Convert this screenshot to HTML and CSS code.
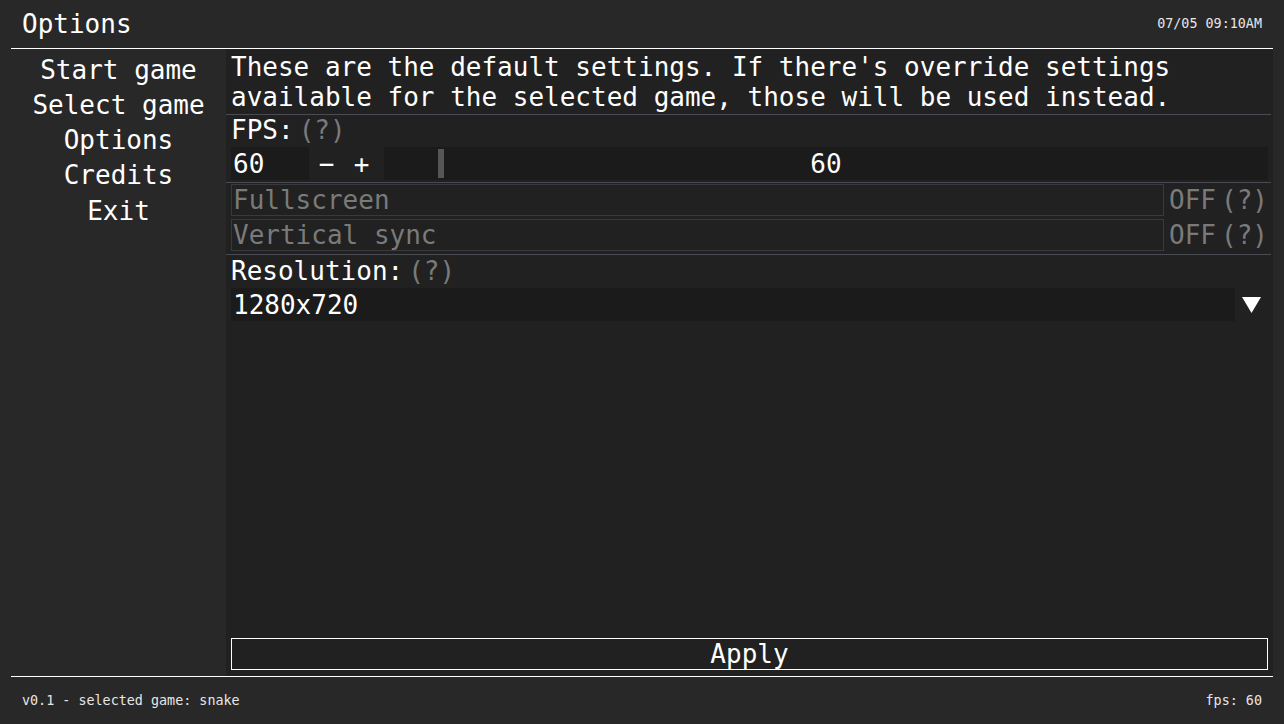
FILE: index.html
```html
<!DOCTYPE html>
<html lang="en">
<head>
<meta charset="utf-8">
<title>Options</title>
<link rel="stylesheet" href="styles.css">
</head>
<body>
<div class="app">
  <header class="topbar">
    <span class="title">Options</span>
    <span class="clock">07/05 09:10AM</span>
  </header>
  <div class="content">
    <nav class="sidebar">
      <div class="menu-item">Start game</div>
      <div class="menu-item">Select game</div>
      <div class="menu-item">Options</div>
      <div class="menu-item">Credits</div>
      <div class="menu-item">Exit</div>
    </nav>
    <main class="panel">
      <p class="intro">These are the default settings. If there's override settings<br>available for the selected game, those will be used instead.</p>
      <div class="sep"></div>
      <div class="label">FPS:<span class="help">(?)</span></div>
      <div class="fps-row">
        <div class="fps-input">60</div>
        <div class="step">&#8722;</div>
        <div class="step">+</div>
        <div class="slider">
          <div class="grab"></div>
          <span class="slider-value">60</span>
        </div>
      </div>
      <div class="sep sep-fps"></div>
      <div class="toggle-row">
        <div class="toggle-box">Fullscreen</div>
        <span class="toggle-state">OFF</span><span class="help">(?)</span>
      </div>
      <div class="toggle-row toggle-row-2">
        <div class="toggle-box">Vertical sync</div>
        <span class="toggle-state">OFF</span><span class="help">(?)</span>
      </div>
      <div class="sep sep-toggles"></div>
      <div class="label label-res">Resolution:<span class="help">(?)</span></div>
      <div class="combo">
        <div class="combo-value">1280x720</div>
        <div class="combo-arrow">
          <svg width="19" height="16" viewBox="0 0 19 16"><polygon points="0,0 19,0 9.5,16" fill="#ffffff"/></svg>
        </div>
      </div>
      <button class="apply">Apply</button>
    </main>
  </div>
  <footer class="bottombar">
    <span>v0.1 - selected game: snake</span>
    <span>fps: 60</span>
  </footer>
</div>
</body>
</html>
```

FILE: styles.css
```css
* {
  box-sizing: border-box;
}

html, body {
  margin: 0;
  padding: 0;
  background: #282828;
}

body {
  font-family: "DejaVu Sans Mono", "Liberation Mono", monospace;
  color: #ffffff;
}

.app {
  width: 1284px;
  height: 724px;
  padding: 0 11px;
  display: flex;
  flex-direction: column;
}

.topbar {
  height: 49px;
  border-bottom: 1px solid #ffffff;
  display: flex;
  align-items: center;
  justify-content: space-between;
  padding: 0 11px 1px 11px;
}

.title {
  font-size: 26px;
  line-height: 30px;
}

.clock {
  font-size: 13.4px;
  color: #e6e6e6;
}

.content {
  height: 627px;
  display: flex;
}

.sidebar {
  width: 215px;
  padding-top: 3.5px;
  display: flex;
  flex-direction: column;
  align-items: center;
}

.menu-item {
  font-size: 26px;
  line-height: 35.25px;
  white-space: pre;
}

.panel {
  flex: 1;
  background: #212121;
  padding: 3px 5px 6px 5px;
  display: flex;
  flex-direction: column;
  font-size: 26px;
  line-height: 30px;
}

.intro {
  margin: 0;
  white-space: nowrap;
}

.sep {
  height: 1px;
  background: #4a4a52;
  margin: 2px -3px 0 -5px;
}

.sep-toggles {
  margin-top: 3px;
}

.label {
  display: flex;
  white-space: pre;
}

.label-res {
  margin-top: 1px;
}

.help {
  color: #7a7a7a;
  margin-left: 5px;
}

.fps-row {
  margin-top: 2px;
  height: 33px;
  display: flex;
  align-items: stretch;
}

.fps-input {
  width: 78px;
  background: #1b1b1b;
  padding-left: 2px;
  display: flex;
  align-items: center;
}

.step {
  width: 35px;
  display: flex;
  align-items: center;
  justify-content: center;
}

.slider {
  flex: 1;
  margin-left: 5px;
  background: #1b1b1b;
  position: relative;
  display: flex;
  align-items: center;
  justify-content: center;
}

.grab {
  position: absolute;
  left: 54px;
  top: 2px;
  width: 6px;
  height: 29px;
  background: #565656;
}

.toggle-row {
  margin-top: 1px;
  height: 32px;
  display: flex;
  align-items: center;
  color: #7a7a7a;
}

.toggle-row-2 {
  margin-top: 3px;
}

.toggle-box {
  flex: 1;
  height: 32px;
  border: 1px solid #3a3a3a;
  padding-left: 1px;
  display: flex;
  align-items: center;
}

.toggle-state {
  margin-left: 5px;
}

.toggle-row .help {
  margin-left: 5px;
}

.combo {
  margin-top: 2px;
  height: 33px;
  display: flex;
}

.combo-value {
  flex: 1;
  background: #1b1b1b;
  padding-left: 2px;
  display: flex;
  align-items: center;
}

.combo-arrow {
  width: 33px;
  display: flex;
  align-items: center;
  justify-content: center;
}

.combo-arrow svg {
  display: block;
}

.apply {
  margin-top: auto;
  height: 32px;
  background: transparent;
  border: 1px solid #ffffff;
  color: #ffffff;
  font-family: inherit;
  font-size: 26px;
  line-height: 30px;
  padding: 0 0 0 0;
}

.bottombar {
  flex: 1;
  border-top: 1px solid #ffffff;
  display: flex;
  align-items: center;
  justify-content: space-between;
  padding: 0 11px 1px 11px;
  font-size: 13.4px;
  color: #e6e6e6;
}
```
